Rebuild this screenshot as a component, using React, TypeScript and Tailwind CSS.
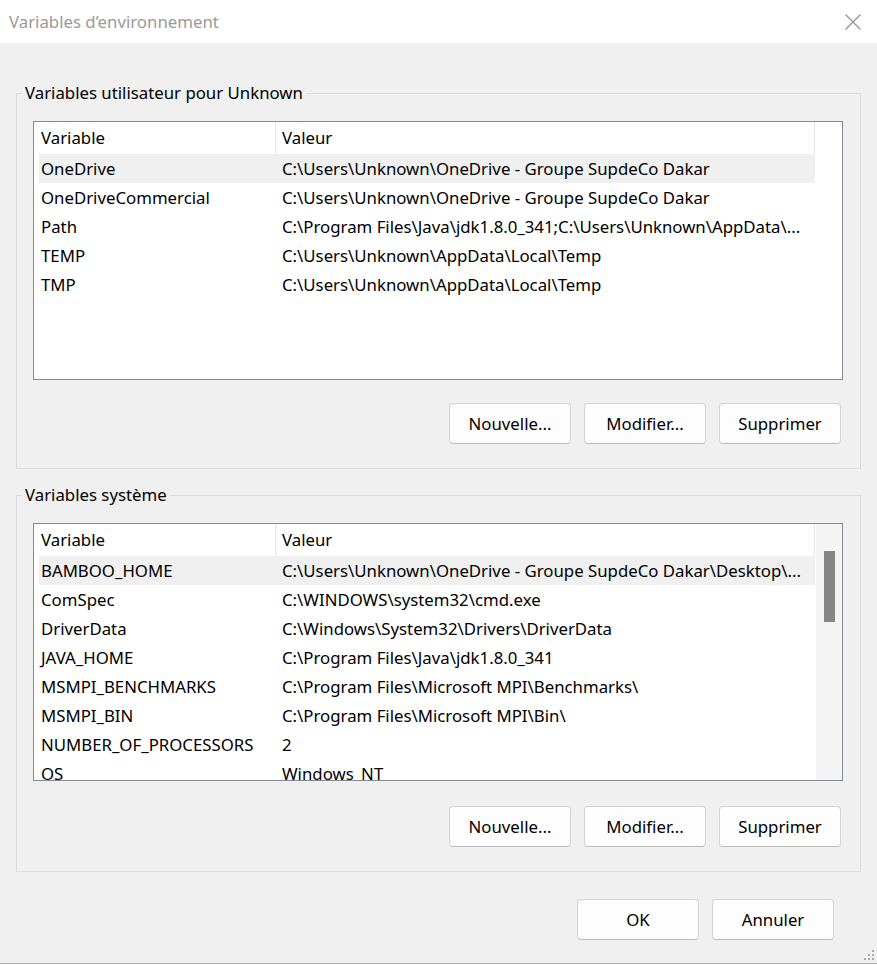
const userVars = [
  ["OneDrive", "C:\\Users\\Unknown\\OneDrive - Groupe SupdeCo Dakar"],
  ["OneDriveCommercial", "C:\\Users\\Unknown\\OneDrive - Groupe SupdeCo Dakar"],
  ["Path", "C:\\Program Files\\Java\\jdk1.8.0_341;C:\\Users\\Unknown\\AppData\\..."],
  ["TEMP", "C:\\Users\\Unknown\\AppData\\Local\\Temp"],
  ["TMP", "C:\\Users\\Unknown\\AppData\\Local\\Temp"],
];

const systemVars = [
  ["BAMBOO_HOME", "C:\\Users\\Unknown\\OneDrive - Groupe SupdeCo Dakar\\Desktop\\..."],
  ["ComSpec", "C:\\WINDOWS\\system32\\cmd.exe"],
  ["DriverData", "C:\\Windows\\System32\\Drivers\\DriverData"],
  ["JAVA_HOME", "C:\\Program Files\\Java\\jdk1.8.0_341"],
  ["MSMPI_BENCHMARKS", "C:\\Program Files\\Microsoft MPI\\Benchmarks\\"],
  ["MSMPI_BIN", "C:\\Program Files\\Microsoft MPI\\Bin\\"],
  ["NUMBER_OF_PROCESSORS", "2"],
  ["OS", "Windows_NT"],
];

function Button({ label }: { label: string }) {
  return (
    <button className="w-[122px] h-[41px] rounded-[4px] border border-[#d3d3d3] border-b-[#bcbcbc] bg-[#fdfdfd] text-[16.8px] text-black">
      {label}
    </button>
  );
}

function VarList({ rows, height, scrollbar }: { rows: string[][]; height: string; scrollbar?: boolean }) {
  return (
    <div className={`${height} border border-[#868a94] bg-white flex overflow-hidden`}>
      <div className="pl-[5px] flex-1 min-w-0 overflow-hidden">
        <div className="w-[776px]">
          {/* header */}
          <div className="flex h-[32px] text-black">
            <div className="w-[236px] pl-[2px] flex items-center">Variable</div>
            <div className="flex-1 pl-[6px] flex items-center border-l border-r border-[#e5e5e5]">Valeur</div>
          </div>
          {rows.map(([name, value], i) => (
            <div key={name} className={`flex h-[29px] items-center ${i === 0 ? "bg-[#f0f0f0]" : ""}`}>
              <div className="w-[236px] pl-[2px] whitespace-nowrap overflow-hidden">{name}</div>
              <div className="flex-1 pl-[7px] whitespace-nowrap overflow-hidden">{value}</div>
            </div>
          ))}
        </div>
      </div>
      {scrollbar && (
        <div className="w-[26px] bg-[#f4f4f4] pt-[27px] pl-[8px]">
          <div className="w-[11px] h-[71px] bg-[#868686]" />
        </div>
      )}
    </div>
  );
}

function Group({ title, children }: { title: string; children: React.ReactNode }) {
  return (
    <fieldset className="mx-[16px] border border-[#dcdcdc] pl-[16px] pr-[17px] pb-[24px]">
      <legend className="-ml-[11px] px-[3px] leading-[20px] text-black">{title}</legend>
      {children}
    </fieldset>
  );
}

export default function App() {
  return (
    <div className="w-[877px] h-[967px] bg-white font-['Noto_Sans','Open_Sans',sans-serif] text-[16.8px] text-black">
      <div className="h-[964px] flex flex-col rounded-t-[8px] overflow-hidden border-b border-[#a9a9a9]">
        {/* title bar */}
        <div className="h-[43px] bg-white flex items-center justify-between pl-[9px] pr-[16px]">
          <span className="text-[16.8px] text-[#9a9a9a]">Variables d’environnement</span>
          <svg width="16" height="16" viewBox="0 0 16 16" className="text-[#8e8e8e]">
            <path d="M0.5 0.5 L15.5 15.5 M15.5 0.5 L0.5 15.5" stroke="currentColor" strokeWidth="1.1" fill="none" />
          </svg>
        </div>

        {/* body */}
        <div className="flex-1 bg-[#f0f0f0] pt-[40px] flex flex-col">
          <Group title="Variables utilisateur pour Unknown">
            <div className="pt-[18px]">
              <VarList rows={userVars} height="h-[259px]" />
            </div>
            <div className="mt-[23px] flex justify-end gap-[13px] pr-[2px]">
              <Button label="Nouvelle..." />
              <Button label="Modifier..." />
              <Button label="Supprimer" />
            </div>
          </Group>

          <div className="mt-[16px]">
            <Group title="Variables système">
              <div className="pt-[18px]">
                <VarList rows={systemVars} height="h-[258px]" scrollbar />
              </div>
              <div className="mt-[25px] flex justify-end gap-[13px] pr-[2px]">
                <Button label="Nouvelle..." />
                <Button label="Modifier..." />
                <Button label="Supprimer" />
              </div>
            </Group>
          </div>

          <div className="mt-[27px] flex justify-end gap-[13px] pr-[43px]">
            <Button label="OK" />
            <Button label="Annuler" />
          </div>

          {/* size grip */}
          <div className="mt-auto flex justify-end pr-[3px] pb-[3px]">
            <svg width="10" height="10" viewBox="0 0 10 10" className="text-[#a8a8a8]">
              <rect x="8" y="0" width="2" height="2" fill="currentColor" />
              <rect x="4" y="4" width="2" height="2" fill="currentColor" />
              <rect x="8" y="4" width="2" height="2" fill="currentColor" />
              <rect x="0" y="8" width="2" height="2" fill="currentColor" />
              <rect x="4" y="8" width="2" height="2" fill="currentColor" />
              <rect x="8" y="8" width="2" height="2" fill="currentColor" />
            </svg>
          </div>
        </div>
      </div>
    </div>
  );
}
